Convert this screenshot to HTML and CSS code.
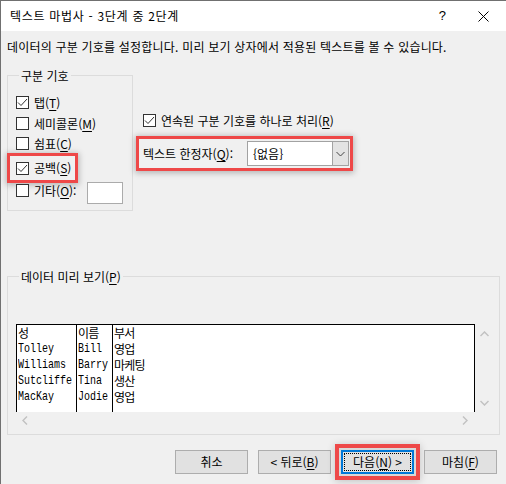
FILE: index.html
```html
<html lang="ko">
<head>
    <meta charset="UTF-8">
    <title>텍스트 마법사 - 3단계 중 2단계</title>
    <link rel="stylesheet" href="styles.css">
</head>
<body>
    <div class="window">
        <div class="titlebar">
            <span class="title">텍스트 마법사 - 3단계 중 2단계</span>
            <span class="help">?</span>
            <svg class="close" width="11" height="11" viewBox="0 0 11 11"><path d="M0.5 0.5L10.5 10.5M10.5 0.5L0.5 10.5" stroke="#000" stroke-width="1"/></svg>
        </div>
        <div class="body">
            <p class="desc">데이터의 구분 기호를 설정합니다. 미리 보기 상자에서 적용된 텍스트를 볼 수 있습니다.</p>
            <div class="top">
                <div class="group sep">
                    <div class="group-title">구분 기호</div>
                    <div class="check r1"><span class="box"><svg width="11" height="11" viewBox="0 0 11 11"><path d="M1 5.5L4 8.5L10 2" fill="none" stroke="#333" stroke-width="1"/></svg></span>탭(<u>T</u>)</div>
                    <div class="check r2"><span class="box"></span>세미콜론(<u>M</u>)</div>
                    <div class="check r3"><span class="box"></span>쉼표(<u>C</u>)</div>
                    <div class="check r4 hl"><span class="box"><svg width="11" height="11" viewBox="0 0 11 11"><path d="M1 5.5L4 8.5L10 2" fill="none" stroke="#333" stroke-width="1"/></svg></span>공백(<u>S</u>)</div>
                    <div class="check r5"><span class="box"></span>기타(<u>O</u>):<span class="other"></span></div>
                </div>
                <div class="options">
                    <div class="check"><span class="box"><svg width="11" height="11" viewBox="0 0 11 11"><path d="M1 5.5L4 8.5L10 2" fill="none" stroke="#333" stroke-width="1"/></svg></span>연속된 구분 기호를 하나로 처리(<u>R</u>)</div>
                    <div class="qual hl">
                        <span>텍스트 한정자(<u>Q</u>):</span>
                        <div class="combo">
                            <span class="value">{없음}</span>
                            <span class="drop"><svg width="9" height="6" viewBox="0 0 9 6"><path d="M0.5 1L4.5 5L8.5 1" fill="none" stroke="#444" stroke-width="1"/></svg></span>
                        </div>
                    </div>
                </div>
            </div>
            <div class="group preview">
                <div class="group-title">데이터 미리 보기(<u>P</u>)</div>
                <div class="lb-wrap">
                    <div class="lb-main">
                        <div class="lb">
                            <div class="col c1">
                                <div>성</div>
                                <div><span class="lat">Tolley</span></div>
                                <div><span class="lat">Williams</span></div>
                                <div><span class="lat">Sutcliffe</span></div>
                                <div><span class="lat">MacKay</span></div>
                            </div>
                            <div class="col c2">
                                <div>이름</div>
                                <div><span class="lat">Bill</span></div>
                                <div><span class="lat">Barry</span></div>
                                <div><span class="lat">Tina</span></div>
                                <div><span class="lat">Jodie</span></div>
                            </div>
                            <div class="col c3">
                                <div>부서</div><div>영업</div><div>마케팅</div><div>생산</div><div>영업</div>
                            </div>
                        </div>
                        <div class="hscroll">
                            <svg width="6" height="9" viewBox="0 0 6 9"><path d="M5 0.5L1 4.5L5 8.5" fill="none" stroke="#c2c2c2" stroke-width="1.5"/></svg>
                            <svg width="6" height="9" viewBox="0 0 6 9"><path d="M1 0.5L5 4.5L1 8.5" fill="none" stroke="#c2c2c2" stroke-width="1.5"/></svg>
                        </div>
                    </div>
                    <div class="vscroll">
                        <svg width="9" height="6" viewBox="0 0 9 6"><path d="M0.5 5L4.5 1L8.5 5" fill="none" stroke="#c2c2c2" stroke-width="1.5"/></svg>
                        <svg width="9" height="6" viewBox="0 0 9 6"><path d="M0.5 1L4.5 5L8.5 1" fill="none" stroke="#c2c2c2" stroke-width="1.5"/></svg>
                    </div>
                </div>
            </div>
            <div class="buttons">
                <div class="btn">취소</div>
                <div class="btn">&lt; 뒤로(<u>B</u>)</div>
                <div class="btn primary"><span class="focus">다음(<u>N</u>) &gt;</span></div>
                <div class="btn">마침(<u>F</u>)</div>
            </div>
        </div>
    </div>
</body>
</html>
```

FILE: styles.css
```css
*{margin:0;padding:0;box-sizing:border-box;}
body{font-family:"Noto Sans CJK KR","Liberation Sans",sans-serif;font-size:12px;color:#000;background:#f0f0f0;overflow:hidden;}
u{text-decoration:underline;text-underline-offset:2px;}

.window{width:506px;height:484px;border-top:1px solid #707070;border-left:1px solid #707070;background:#f0f0f0;}
.titlebar{height:30px;background:#fff;display:flex;align-items:center;padding-left:9px;}
.titlebar .title{font-size:12px;line-height:16px;letter-spacing:0.7px;}
.titlebar .help{margin-left:auto;font-size:13px;line-height:16px;font-family:"Liberation Sans",sans-serif;}
.titlebar .close{margin-left:32px;margin-right:17px;}

.body{padding:0 0 0 6px;}
.desc{padding-top:8px;line-height:16px;letter-spacing:0.2px;}

.top{display:flex;margin-top:20px;}
.group{border:1px solid #dcdcdc;}
.group-title{width:fit-content;margin:-8px 0 0 3px;padding:0 2px;line-height:16px;background:#f0f0f0;}
.sep{width:126px;height:136px;padding-left:8px;}

.check{display:flex;align-items:center;height:13px;line-height:16px;white-space:nowrap;}
.box{width:13px;height:13px;border:1px solid #333;background:#fff;margin-right:5px;display:flex;align-items:center;justify-content:center;flex:none;}
.sep .r1{margin-top:12px;}
.sep .r2{margin-top:8px;}
.sep .r3{margin-top:7px;}
.sep .r4{margin-top:6px;}
.sep .r5{margin-top:4px;}
.other{width:36px;height:22px;border:1px solid #ababab;background:#fff;margin-left:11px;margin-top:5px;}

.hl{outline:3px solid #ee4848;box-shadow:0 0 0 3px #ee4848,0 1px 6px 4px rgba(0,0,0,.25);}
.sep .hl{width:65px;height:24px;margin-left:-6px;padding-left:6px;}

.options{margin-left:10px;padding-top:39px;}
.qual{display:flex;align-items:center;width:211px;height:29px;margin:12px 0 0 -4px;padding:0 1px 0 4px;}
.combo{margin-left:auto;width:102px;height:25px;border:1px solid #a2a2a2;background:#fff;display:flex;align-items:stretch;}
.combo .value{flex:1;padding-left:5px;line-height:23px;}
.combo .drop{width:16px;background:#e3e3e3;border-left:1px solid #a2a2a2;display:flex;align-items:center;justify-content:center;}

.preview{width:493px;height:159px;margin-top:65px;padding-left:8px;}
.lb-wrap{display:flex;margin-top:39px;}
.lb-main{width:459px;}
.lb{height:88px;border:1px solid #000;border-bottom:none;background:#fff;display:flex;font-size:12px;letter-spacing:-0.8px;line-height:16px;white-space:nowrap;}
.lb .lat{display:inline-block;font-family:"Liberation Mono",monospace;font-size:13.5px;letter-spacing:0;transform:scaleX(0.74);transform-origin:left center;}
.col{height:100%;border-right:1px solid #000;padding-left:1px;}
.c1{width:60px;}
.c2{width:36px;}
.c3{flex:1;border-right:none;}
.hscroll{height:16px;display:flex;align-items:center;justify-content:space-between;padding:0 7px 0 6px;}
.vscroll{width:18px;height:88px;display:flex;flex-direction:column;align-items:center;justify-content:space-between;padding:7px 0 6px;}

.buttons{display:flex;justify-content:flex-end;gap:10px;margin-top:15px;padding-right:9px;}
.btn{width:73px;height:24px;background:#e1e1e1;border:1px solid #adadad;display:flex;align-items:center;justify-content:center;line-height:16px;}
.btn.primary{border:2px solid #0078d7;padding:1px;outline:4px solid #ee4848;outline-offset:2px;box-shadow:0 0 0 2px #d8d8d8,0 1px 8px 6px rgba(0,0,0,.2);}
.btn .focus{width:100%;height:100%;border:1px dotted #000;display:flex;align-items:center;justify-content:center;}
```
